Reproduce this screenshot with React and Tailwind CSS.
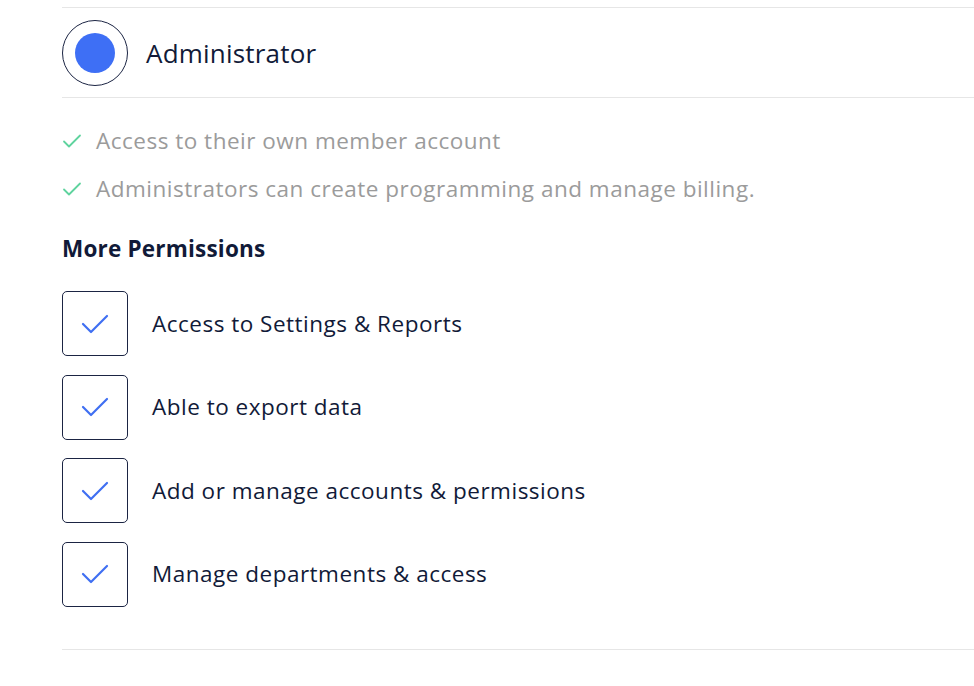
import React from "react";

const basics = [
  "Access to their own member account",
  "Administrators can create programming and manage billing.",
];

const permissions = [
  "Access to Settings & Reports",
  "Able to export data",
  "Add or manage accounts & permissions",
  "Manage departments & access",
];

function SmallCheck() {
  return (
    <svg width="20" height="16" viewBox="0 0 20 16" fill="none" className="shrink-0">
      <path d="M2 8.5l5 5L18 2.5" stroke="#5fd39e" strokeWidth="1.8" strokeLinecap="round" strokeLinejoin="round" />
    </svg>
  );
}

function CheckBox() {
  return (
    <div className="w-[66px] h-[65px] shrink-0 rounded-[5px] border border-[#1b2443] flex items-center justify-center">
      <svg width="28" height="20" viewBox="0 0 28 20" fill="none">
        <path d="M2 10l8 8L26 2" stroke="#3f6ff2" strokeWidth="2.2" strokeLinecap="round" strokeLinejoin="round" />
      </svg>
    </div>
  );
}

export default function App() {
  return (
    <div className="min-h-[686px] bg-white pt-[7px] pl-[62px] font-['Open_Sans',sans-serif]">
      <div className="h-[91px] border-y border-[#e6e6e6] flex items-center gap-[18px]">
        <div className="w-[66px] h-[66px] rounded-full border border-[#1b2443] flex items-center justify-center">
          <div className="w-[40px] h-[40px] rounded-full bg-[#3e6ff5]" />
        </div>
        <span className="text-[26px] leading-[32px] text-[#111a38] tracking-[0.2px]">Administrator</span>
      </div>

      <ul className="mt-[28px] flex flex-col gap-[18px]">
        {basics.map((text) => (
          <li key={text} className="flex items-center gap-[14px] h-[30px]">
            <SmallCheck />
            <span className="text-[22.5px] leading-[30px] text-[#9b9b9b] tracking-[0.5px]">{text}</span>
          </li>
        ))}
      </ul>

      <h3 className="mt-[30px] text-[22.5px] font-bold text-[#111a38] leading-[30px] tracking-[0.2px]">More Permissions</h3>

      <div className="mt-[27px] flex flex-col gap-[18.5px]">
        {permissions.map((text) => (
          <label key={text} className="flex items-center gap-[24px]">
            <CheckBox />
            <span className="text-[22.5px] leading-[30px] text-[#111a38] tracking-[0.5px]">{text}</span>
          </label>
        ))}
      </div>

      <div className="mt-[42px] border-t border-[#e6e6e6]" />
    </div>
  );
}
